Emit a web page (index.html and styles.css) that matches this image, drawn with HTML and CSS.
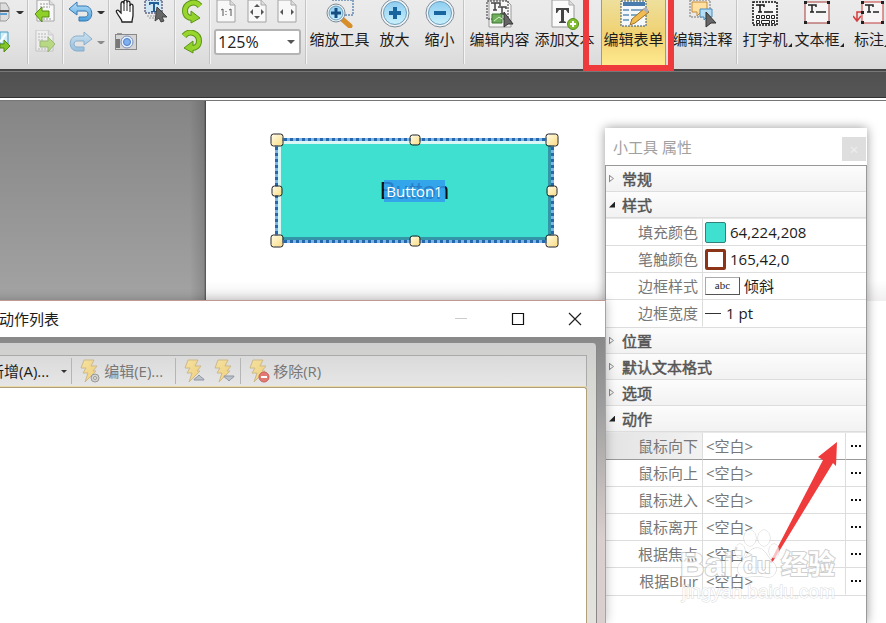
FILE: index.html
```html
<!DOCTYPE html>
<html lang="zh-CN">
<head>
<meta charset="utf-8">
<title>PDF 表单编辑</title>
<link rel="stylesheet" href="styles.css">
</head>
<body>
<svg class="defs" aria-hidden="true">
  <defs>
    <linearGradient id="boltFill" x1="0" y1="0" x2="1" y2="1"><stop offset="0" stop-color="#f4e1a0"/><stop offset="1" stop-color="#f0cf7c"/></linearGradient>
    <linearGradient id="blueBall" x1="0" y1="0" x2="0" y2="1"><stop offset="0" stop-color="#8ecdf0"/><stop offset="1" stop-color="#c9f1fc"/></linearGradient>
    <linearGradient id="undoFill" x1="0" y1="0" x2="0" y2="1"><stop offset="0" stop-color="#b9e1f8"/><stop offset="1" stop-color="#4a9fdc"/></linearGradient>
    <symbol id="bolt" viewBox="0 0 22 24"><path d="M4 1h10l-3 6h6l-4 5h3L5 23l3-9H3l3-5H1z" fill="url(#boltFill)" stroke="#cdb989"/></symbol>
    <symbol id="page" viewBox="0 0 20 24"><path d="M1 0h13l5 5v17H1z" fill="#f8f8f8" stroke="#a2a2a2"/><path d="M14 0v5h5" fill="#ddd" stroke="#aaa"/></symbol>
    <symbol id="turn" viewBox="0 0 22 24"><path d="M3 6c6-7 15-2 15 5 0 5-4 7-7 7" fill="none" stroke="#5b9416" stroke-width="6"/><path d="M12 11v12l-9-5z" fill="#91d12b" stroke="#5b9416"/><path d="M3 6c6-7 15-2 15 5 0 5-4 7-7 7" fill="none" stroke="#98d62e" stroke-width="4"/></symbol>
  </defs>
</svg>

<header class="ribbon">
  <div class="group group-print">
    <button aria-label="打印"><svg width="12" height="22" viewBox="0 0 12 22"><path d="M0 2h6l3 5v10l-3 3H0z" fill="#ddd" stroke="#999"/><path d="M0 10h9" stroke="#555" stroke-width="2"/><path d="M0 13h7" stroke="#5c9fd3" stroke-width="2"/></svg></button>
    <i class="caret"></i>
    <button aria-label="导出"><svg width="12" height="24" viewBox="0 0 12 24"><path d="M0 2h8v12H0z" fill="#cfeefa" stroke="#4b9fc4"/><path d="M0 12l6-8" stroke="#fff" stroke-width="2"/><path d="M0 14h4v-4l6 6-6 6v-4H0z" fill="#82c526" stroke="#568b18"/></svg></button>
  </div>
  <div class="group group-file">
    <button aria-label="导入"><svg width="22" height="24" viewBox="0 0 22 24"><use href="#page" x="2" y="0" width="19" height="23"/><path d="M6 4h8M6 7h10M9 19h8" stroke="#999" stroke-dasharray="2 1"/><path d="M1 14l7-7v4h7v6H8v5z" fill="#8fd028" stroke="#548b14"/></svg></button>
    <button class="faded" aria-label="导出页面"><svg width="22" height="24" viewBox="0 0 22 24"><use href="#page" x="1" y="0" width="19" height="23"/><path d="M4 4h9M4 7h11M4 10h5M4 19h8" stroke="#888" stroke-dasharray="2 1"/><path d="M21 14l-7-7v4H6v6h8v5z" fill="#8fd028" stroke="#548b14"/></svg></button>
  </div>
  <div class="group group-history">
    <button aria-label="撤销"><svg width="26" height="22" viewBox="0 0 26 22"><path d="M1 8l8-7v4h8c9 0 9 15 0 15h-6v-4h6c4 0 4-6 0-6H9v4z" fill="url(#undoFill)" stroke="#3578b4"/></svg></button>
    <i class="caret"></i>
    <button class="faded" aria-label="重做"><svg width="26" height="22" viewBox="0 0 26 22"><path d="M24 8l-8-7v4H9c-9 0-9 15 0 15h7v-4H9c-4 0-4-6 0-6h7v4z" fill="url(#undoFill)" stroke="#3578b4"/></svg></button>
    <i class="caret faded"></i>
  </div>
  <div class="group group-select">
    <button aria-label="手形工具"><svg width="22" height="24" viewBox="0 0 22 24"><path d="M7 22c0-3-3-5-5-9-2-3 1-4 3-1l1 1V4c0-3 3-3 3 0V2c0-3 3-3 3 0v1c0-3 3-2 3 0v3c0-3 3-2 3 0v9c0 3-1 4-1 7z" fill="#fff" stroke="#222" stroke-width="1.300"/><path d="M9 4v7M12 3v8M15 5v7" stroke="#222"/></svg></button>
    <button aria-label="选择文本"><svg width="26" height="24" viewBox="0 0 26 24"><rect x="2" y="0" width="17" height="13" fill="#cfe6f5" stroke="#225" stroke-dasharray="2 1"/><path d="M6 2h10v3h-1l-1-1h-2v7h2v1H8v-1h2V4H8L7 5H6z" fill="#225f99"/><path d="M4 16h10M6 18h8" stroke="#999" stroke-dasharray="2 1"/><path d="M14 7l10 10-5 0 2 4-3 1-2-4-4 3z" fill="#666" stroke="#444"/></svg></button>
    <button aria-label="快照"><svg width="22" height="20" viewBox="0 0 22 20"><path d="M2 1h5v2H2z" fill="#999"/><rect x="0.500" y="2.500" width="21" height="15" fill="#d5d5d5" stroke="#888"/><path d="M1 7h4v9H1z" fill="#777"/><circle cx="12" cy="10" r="6" fill="#e8eefb" stroke="#7792bd"/><circle cx="12" cy="10" r="3.500" fill="#80aff0" stroke="#4c7cc8"/></svg></button>
  </div>
  <div class="group group-rotate">
    <button class="mirrored" aria-label="向左旋转"><svg width="22" height="24" viewBox="0 0 22 24"><use href="#turn" width="22" height="24"/></svg></button>
    <button aria-label="向右旋转"><svg width="22" height="24" viewBox="0 0 22 24"><use href="#turn" width="22" height="24"/></svg></button>
  </div>
  <div class="group group-zoom">
    <div class="fits">
      <button aria-label="实际大小"><svg width="20" height="24" viewBox="0 0 20 24"><use href="#page" width="20" height="24"/><path d="M5 10l2-1v7M13 10l2-1v7" fill="none" stroke="#555"/><path d="M10 11v1M10 14v1" stroke="#555"/></svg></button>
      <button aria-label="适合页面"><svg width="20" height="24" viewBox="0 0 20 24"><use href="#page" width="20" height="24"/><path d="M10 4l3 3H7zM10 19l3-3H7zM3 12l3-3v6zM17 12l-3-3v6z" fill="#555"/></svg></button>
      <button aria-label="适合宽度"><svg width="20" height="24" viewBox="0 0 20 24"><use href="#page" width="20" height="24"/><path d="M3 12l3-3v6zM17 12l-3-3v6z" fill="#555"/></svg></button>
    </div>
    <div class="zoom-box"><select aria-label="缩放比例"><option>125%</option></select></div>
  </div>
  <div class="group group-tools">
    <button class="tool"><svg width="34" height="28" viewBox="0 0 34 28"><path d="M9 0h21v15H19" fill="none" stroke="#235a9c" stroke-dasharray="2 1"/><path d="M19 19l8 7" stroke="#d88e28" stroke-width="5" stroke-linecap="round"/><circle cx="13" cy="13" r="9" fill="#f1f5f7" stroke="#7b8b97"/><circle cx="13" cy="13" r="7" fill="url(#blueBall)" stroke="#6e9dbb"/><path d="M8 13h10M13 8v10" stroke="#174f82" stroke-width="3"/></svg><span>缩放工具</span></button>
    <button class="tool short"><svg width="30" height="28" viewBox="0 0 30 28"><circle cx="15" cy="13" r="14" fill="#f1f5f7" stroke="#7d8d99"/><circle cx="15" cy="13" r="11.500" fill="url(#blueBall)" stroke="#6e9dbb"/><path d="M9 13h12M15 7v12" stroke="#17649f" stroke-width="4"/></svg><span>放大</span></button>
    <button class="tool short"><svg width="30" height="28" viewBox="0 0 30 28"><circle cx="15" cy="13" r="14" fill="#f1f5f7" stroke="#7d8d99"/><circle cx="15" cy="13" r="11.500" fill="url(#blueBall)" stroke="#6e9dbb"/><path d="M9 13h12" stroke="#17649f" stroke-width="4"/></svg><span>缩小</span></button>
  </div>
  <div class="group group-edit">
    <button class="tool"><svg width="30" height="28" viewBox="0 0 30 28"><path d="M4 0h17l5 5v22H4z" fill="#f7f7f7" stroke="#999"/><path d="M2 1h21v18H2z" fill="none" stroke="#333" stroke-dasharray="2 1"/><path d="M6 3h9v3M10 3v7M8 10h4M13 7h8v2M17 7v7M15 14h4" fill="none" stroke="#444" stroke-width="1.500"/><path d="M7 14h10v9H7z" fill="#6dad5b" stroke="#3c7634"/><path d="M9 21l5-4 3 2" stroke="#d8f0ca" fill="none"/><path d="M19 12l9 12h-5l-4 3z" fill="#666" stroke="#333"/></svg><span>编辑内容</span></button>
    <button class="tool"><svg width="30" height="30" viewBox="0 0 30 30"><path d="M2 0h17l5 5v22H2z" fill="#fafafa" stroke="#999"/><path d="M19 0v5h5" fill="#ddd" stroke="#aaa"/><path d="M6 8h13v5h-1l-2-3h-2v11l2 1v1H9v-1l2-1V10H9l-2 3H6z" fill="#444"/><circle cx="23" cy="24" r="5.500" fill="#82bd2f" stroke="#558d1b"/><path d="M20 24h6M23 21v6" stroke="#fff" stroke-width="2"/></svg><span>添加文本</span></button>
    <button class="tool active" aria-pressed="true"><svg width="32" height="28" viewBox="0 0 32 28"><path d="M3 1h25v25H3z" fill="#f4f8fa" stroke="#33557a" stroke-dasharray="2 1"/><path d="M5 2h22v4H5z" fill="#477cad"/><path d="M5 10h6M5 15h6M5 20h6M13 10h12M13 15h10M13 20h8" stroke="#83a9c6" stroke-width="2"/><path d="M12 25l2-6L27 8l4 4-14 11z" fill="#f2bd50" stroke="#9d722c"/><path d="M25 9l3-2 3 4-3 2z" fill="#adb0bc"/></svg><span>编辑表单</span></button>
    <button class="tool"><svg width="32" height="28" viewBox="0 0 32 28"><path d="M3 0h20v17H3z" fill="none" stroke="#777" stroke-dasharray="2 1"/><path d="M5 2h15v10h-6l-4 4v-4H5z" fill="#ffe0a0" stroke="#c58a38"/><path d="M13 9h12v8h-5l-3 3v-3h-4z" fill="#b5dcf5" stroke="#4d8abb"/><path d="M19 12l10 11h-5l-5 4z" fill="#666" stroke="#333"/></svg><span>编辑注释</span></button>
    <div class="callout"></div>
  </div>
  <div class="group group-type">
    <button class="tool mid"><svg width="28" height="28" viewBox="0 0 28 28"><path d="M2 2h24v23H2z" fill="#f6f6f6" stroke="#111" stroke-width="1.500" stroke-dasharray="2 1"/><path d="M5 5h8v2M9 5v7M7 12h4M13 12h9" fill="none" stroke="#111" stroke-width="1.500"/><g fill="none" stroke="#222"><path d="M5.500 15.500h3v3h-3zM10.500 15.500h3v3h-3zM15.500 15.500h3v3h-3zM20.500 15.500h3v3h-3zM5.500 20.500h3v3h-3zM10.500 20.500h8v3h-8zM20.500 20.500h3v3h-3z"/></g></svg><span class="more">打字机</span></button>
    <button class="tool mid"><svg width="28" height="28" viewBox="0 0 28 28"><path d="M2 2h24v21H2z" fill="#f6f4f4" stroke="#a33a3a"/><path d="M5 5h8v2M9 5v7M7 12h4M13 12h10" fill="none" stroke="#222" stroke-width="1.500"/><path d="M1 1h3v3H1zM24 1h3v3h-3zM1 21h3v3H1zM24 21h3v3h-3z" fill="#222"/></svg><span class="more">文本框</span></button>
    <button class="tool mid"><svg width="32" height="28" viewBox="0 0 32 28"><path d="M9 2h21v21H9z" fill="#f6f4f4" stroke="#c33c3c"/><path d="M9 12H4v8M0 16l4 5 4-5" fill="none" stroke="#d53c3c" stroke-width="1.500"/><path d="M12 5h8v2M16 5v7M14 12h4M20 12h6" fill="none" stroke="#222" stroke-width="1.500"/><path d="M8 1h3v3H8zM28 1h3v3h-3zM8 21h3v3H8zM28 21h3v3h-3zM8 11h3v3H8z" fill="#222"/></svg><span class="more">标注</span></button>
  </div>
</header>
<div class="strip"></div>

<main class="workspace">
  <div class="gutter"></div>
  <div class="sheet"></div>

  <div class="field">
    <div class="field-face">
      <span class="caption">Button</span>
      <span class="name-tag">Button1</span>
    </div>
    <i class="grip nw"></i><i class="grip small n"></i><i class="grip ne"></i>
    <i class="grip small w"></i><i class="grip small e"></i>
    <i class="grip sw"></i><i class="grip small s"></i><i class="grip se"></i>
  </div>

  <aside class="panel">
    <div class="panel-head"><h2>小工具 属性</h2><button aria-label="关闭">×</button></div>
    <div class="panel-body">
      <button class="section" aria-expanded="false">常规</button>
      <button class="section open" aria-expanded="true">样式</button>
      <table>
        <tr><th scope="row">填充颜色</th><td><div class="value"><i class="swatch fill"></i>64,224,208</div></td></tr>
        <tr><th scope="row">笔触颜色</th><td><div class="value"><i class="swatch stroke"></i>165,42,0</div></td></tr>
        <tr><th scope="row">边框样式</th><td><div class="value"><i class="bevel">abc</i>倾斜</div></td></tr>
        <tr><th scope="row">边框宽度</th><td><div class="value"><i class="line"></i>1 pt</div></td></tr>
      </table>
      <button class="section" aria-expanded="false">位置</button>
      <button class="section" aria-expanded="false">默认文本格式</button>
      <button class="section" aria-expanded="false">选项</button>
      <button class="section open" aria-expanded="true">动作</button>
      <table class="actions">
        <tr class="current"><th scope="row">鼠标向下</th><td>&lt;空白&gt;</td><td class="pick"><button aria-label="选择动作"><i></i></button></td></tr>
        <tr><th scope="row">鼠标向上</th><td>&lt;空白&gt;</td><td class="pick"><button aria-label="选择动作"><i></i></button></td></tr>
        <tr><th scope="row">鼠标进入</th><td>&lt;空白&gt;</td><td class="pick"><button aria-label="选择动作"><i></i></button></td></tr>
        <tr><th scope="row">鼠标离开</th><td>&lt;空白&gt;</td><td class="pick"><button aria-label="选择动作"><i></i></button></td></tr>
        <tr><th scope="row">根据焦点</th><td>&lt;空白&gt;</td><td class="pick"><button aria-label="选择动作"><i></i></button></td></tr>
        <tr><th scope="row">根据Blur</th><td>&lt;空白&gt;</td><td class="pick"><button aria-label="选择动作"><i></i></button></td></tr>
      </table>
    </div>
    <svg class="pointer" width="70" height="122" viewBox="0 0 70 122"><path d="M68 0L49 15l5 3L1 120l2 1L64 21l3 3z" fill="#ef3b3b"/></svg>
    <div class="watermark">
      <div class="brand"><span class="bai">Bai</span>
        <svg width="48" height="52" viewBox="0 0 48 52"><g fill="#fff" stroke="#bbb"><ellipse cx="7" cy="22" rx="5" ry="7"/><ellipse cx="17" cy="9" rx="6" ry="8"/><ellipse cx="31" cy="9" rx="6" ry="8"/><ellipse cx="41" cy="22" rx="5" ry="7"/><path d="M24 19c8 0 10 9 16 14 6 6 3 16-6 15-7-1-13-1-20 0-9 1-12-9-6-15 6-5 8-14 16-14z"/></g><text x="24" y="44" text-anchor="middle" class="du">du</text></svg>
        <span class="jy">经验</span></div>
      <div class="site">jingyan.baidu.com</div>
    </div>
  </aside>

  <section class="dialog">
    <div class="title-bar">
      <h2>动作列表</h2>
      <button aria-label="最小化"><svg width="14" height="14" viewBox="0 0 14 14"><path d="M1 6.500h12" stroke="#ccc"/></svg></button>
      <button aria-label="最大化"><svg width="14" height="14" viewBox="0 0 14 14"><path d="M1.500 1.500h11v11h-11z" fill="none" stroke="#111" stroke-width="1.200"/></svg></button>
      <button aria-label="关闭"><svg width="14" height="14" viewBox="0 0 14 14"><path d="M1 1l12 12M13 1L1 13" stroke="#222" stroke-width="1.200"/></svg></button>
    </div>
    <div class="frame"><div class="inner">
      <div class="toolbar">
        <button class="add">新增(A)...</button><i class="caret"></i>
        <i class="rule"></i>
        <button disabled><svg width="22" height="24" viewBox="0 0 22 24"><use href="#bolt" width="22" height="24"/><circle cx="15" cy="19" r="4" fill="#d2d2cf" stroke="#999"/><circle cx="15" cy="19" r="1.500" fill="#eee" stroke="#999"/></svg>编辑(E)...</button>
        <i class="rule wide"></i>
        <button disabled aria-label="上移"><svg width="22" height="24" viewBox="0 0 22 24"><use href="#bolt" width="22" height="24"/><path d="M10 21c0-2 3-2 5-5 2 3 5 3 5 5z" fill="#bcc2cb" stroke="#8f95a0"/></svg></button>
        <button class="down" disabled aria-label="下移"><svg width="22" height="24" viewBox="0 0 22 24"><use href="#bolt" width="22" height="24"/><path d="M10 17c0 2 3 2 5 5 2-3 5-3 5-5z" fill="#bcc2cb" stroke="#8f95a0"/></svg></button>
        <i class="rule"></i>
        <button disabled><svg width="22" height="24" viewBox="0 0 22 24"><use href="#bolt" width="22" height="24"/><circle cx="15" cy="18" r="5" fill="#e07a72" stroke="#c8605a"/><path d="M12 18h6" stroke="#fff" stroke-width="2"/></svg>移除(R)</button>
      </div>
      <div class="list"></div>
    </div></div>
  </section>
</main>
</body>
</html>
```
FILE: styles.css
```css
* { box-sizing: border-box; }
body {
  margin: 0;
  height: 100vh;
  overflow: hidden;
  display: flex;
  flex-direction: column;
  font: 15px/22px "Open Sans", "Noto Sans CJK SC", sans-serif;
  color: #1c1c1c;
}
button {
  border: 0;
  padding: 0;
  background: none;
  font: inherit;
  color: inherit;
  white-space: nowrap;
}
svg { display: block; flex: none; }
h2 { margin: 0; font: inherit; }
.defs { position: absolute; width: 0; height: 0; }
.faded { opacity: .5; }
.mirrored svg { transform: scaleX(-1); }
.caret {
  border: 3px solid transparent;
  border-top-color: #333;
  border-bottom: 0;
}

/* Ribbon */
.ribbon {
  display: flex;
  flex: none;
  height: 69px;
  background: linear-gradient(#ebebeb, #e6e6e6 50%, #d9d9d9);
}
.group {
  flex: none;
  margin-bottom: 5px;
  border-right: 1px solid #c4c4c4;
  box-shadow: 1px 0 #f5f5f5;
}
.group-print, .group-history {
  display: grid;
  grid-template-rows: 24px 24px;
  row-gap: 6px;
  align-items: center;
  align-content: start;
}
.group-print { width: 28px; grid-template-columns: 16px 8px; }
.group-history { width: 46px; padding-left: 5px; grid-template-columns: 29px 8px; }
.group-file, .group-rotate {
  display: flex;
  flex-direction: column;
  align-items: center;
  gap: 6px;
  width: 35px;
}
.group-select {
  display: grid;
  grid-template-columns: 28px 28px;
  grid-template-rows: 24px 24px;
  row-gap: 6px;
  align-content: start;
  width: 66px;
  padding-left: 6px;
}
.group-zoom { width: 96px; padding: 0 4px; }
.fits { display: flex; justify-content: space-between; padding: 0 4px 0 2px; }
.zoom-box { position: relative; margin-top: 5px; }
.zoom-box::after {
  content: "";
  position: absolute;
  right: 6px;
  top: 11px;
  border: 4px solid transparent;
  border-top-color: #555;
  border-bottom: 0;
}
select {
  appearance: none;
  display: block;
  width: 100%;
  height: 26px;
  padding: 0 2px;
  border: 2px solid #b4b4b4;
  border-radius: 3px;
  background: #fff;
  font: 16px "Open Sans", sans-serif;
  color: #222;
}
.group-tools, .group-edit, .group-type { display: flex; }
.group-tools { padding: 0 1px; }
.group-edit { position: relative; padding: 0 1px 0 3px; }
.group-type { border: 0; padding: 0 2px; }
.tool {
  flex: none;
  width: 65px;
  height: 66px;
  display: grid;
  grid-template-rows: 28px 22px;
  justify-items: center;
  align-content: start;
}
.tool.short { width: 45px; }
.tool.mid { width: 52px; }
.tool.active {
  margin: 0 4px;
  background: linear-gradient(#eedf9c, #f0d273 50%, #ffe98f);
  box-shadow: inset 1px 0 #a89b70, inset -1px 0 #a89b70;
}
.more { position: relative; }
.more::after {
  content: "";
  position: absolute;
  left: 100%;
  bottom: 3px;
  border: 2px solid #222;
  border-top-color: transparent;
  border-left-color: transparent;
}
.callout {
  position: absolute;
  left: 119px;
  top: -6px;
  width: 91px;
  height: 77px;
  border: 6px solid #ee3a3c;
  z-index: 1;
}
.strip {
  flex: none;
  height: 32px;
  background: linear-gradient(#444 2px, #777 2px 3px, #505050 3px, #565656 28px, #333 28px 29px, #fff 29px 31px, #777 31px);
}

/* Workspace */
.workspace { flex: 1; display: flex; position: relative; min-height: 0; }
.gutter {
  flex: none;
  width: 206px;
  background: linear-gradient(90deg, transparent 92%, #0002 99%, #0008), linear-gradient(#858585, #a3a3a3 200px);
}
.sheet { flex: 1; background: linear-gradient(#fff 180px, #f0eeee 200px, #fff 200px); }

/* Selected form field */
.field {
  position: absolute;
  left: 275px;
  top: 37px;
  width: 279px;
  height: 105px;
  border: 3px dotted #7db4e4;
  background: #2468ae;
}
.field-face {
  display: grid;
  place-items: center;
  height: 100%;
  border: 3px solid;
  border-color: #d8f7f5 #3595a8 #3595a8 #d8f7f5;
  background: #40e0d0;
}
.caption, .name-tag { grid-area: 1 / 1; }
.caption { font: 24px "Liberation Sans", sans-serif; color: #111; }
.name-tag { padding: 0 2px; background: #2f97f0d0; color: #fff; }
.grip {
  position: absolute;
  width: 13px;
  height: 13px;
  border: 1px solid #222;
  border-radius: 3px;
  background: linear-gradient(135deg, #fffbe8, #fbdc80);
  translate: -50% -50%;
}
.grip.small { width: 11px; height: 11px; }
.nw, .w, .sw { left: -1px; }
.n, .s { left: 50%; }
.ne, .e, .se { left: calc(100% + 1px); }
.nw, .n, .ne { top: -1px; }
.w, .e { top: 50%; }
.sw, .s, .se { top: calc(100% + 1px); }

/* Property panel */
.panel {
  position: absolute;
  right: 19px;
  top: 27px;
  bottom: 0;
  width: 262px;
  display: flex;
  flex-direction: column;
  background: #fff;
  box-shadow: 0 0 10px #0006;
}
.panel-head {
  display: flex;
  justify-content: space-between;
  align-items: center;
  height: 37px;
  padding: 0 1px 0 8px;
  color: #a0a0a0;
}
.panel-head button { width: 24px; height: 24px; margin-top: 4px; background: #dedede; color: #eee; }
.panel-body { flex: 1; border: 1px solid #999; border-bottom: 0; }
.section {
  display: flex;
  align-items: center;
  width: 100%;
  height: 26px;
  padding-left: 3px;
  border-bottom: 1px solid #ddd;
  background: linear-gradient(#fcfcfc, #f2f2f2);
  color: #555;
  -webkit-text-stroke: 0.5px #555;
}
.section::before {
  content: "";
  width: 5px;
  height: 8px;
  margin-right: 8px;
  background: #888;
  clip-path: polygon(0 0, 100% 50%, 0 100%, 0 0, 1px 2px, 1px 6px, 4px 50%, 1px 2px);
}
.section.open::before { width: 6px; height: 6px; margin-right: 7px; background: #222; clip-path: polygon(100% 0, 100% 100%, 0 100%); }
table {
  width: 100%;
  table-layout: fixed;
  border-spacing: 0;
  border-bottom: 1px solid #ddd;
  border-top: 1px solid #e8e8e8;
}
th, td { height: 27px; padding: 0; border-bottom: 1px solid #ddd; line-height: 22px; }
tr:last-child > * { border-bottom-color: transparent; }
th { width: 97px; padding-right: 4px; border-right: 1px solid #ddd; text-align: right; font-weight: 400; color: #777; }
td { padding-left: 2px; }
.value { display: flex; align-items: center; gap: 4px; }
.actions td { padding-left: 3px; color: #777; }
.current th { background: linear-gradient(90deg, #e3e3e3, #f2f2f2); }
.current th, .current td { border-bottom-color: #999; }
.swatch { width: 21px; height: 21px; border: 1px solid #337f79; border-radius: 2px; background: #40e0d0; }
.swatch.stroke { border: 3px solid #8c3418; background: #fff; }
.bevel {
  width: 35px;
  height: 18px;
  border: 1px solid #aaa;
  border-right-color: #555;
  border-bottom-color: #555;
  font: 11px/14px "Liberation Serif", serif;
  text-align: center;
}
.line { width: 16px; height: 1px; margin-right: 1px; background: #333; }
.actions .pick { width: 21px; padding: 0; border-left: 1px solid #ddd; text-align: center; }
.pick button { display: grid; place-items: center; width: 100%; height: 22px; }
.pick i { width: 2px; height: 2px; background: #111; box-shadow: -4px 0 #111, 4px 0 #111; }

.pointer { position: absolute; right: 28px; top: 314px; }
.watermark {
  position: absolute;
  right: 32px;
  top: 401px;
  opacity: .7;
  color: #fff;
  -webkit-text-stroke: 2px #bbb;
  paint-order: stroke fill;
}
.brand { display: flex; align-items: center; justify-content: flex-end; height: 52px; }
.bai { font: bold 34px/34px "Liberation Sans", sans-serif; margin-top: 18px; }
.jy { font-size: 27px; font-weight: 700; line-height: 28px; margin-top: 18px; }
.du { font: bold 22px "Liberation Sans", sans-serif; fill: #fff; stroke: #bbb; stroke-width: 2px; }
.site { font: 19px/22px "Liberation Sans", sans-serif; text-align: right; -webkit-text-stroke: 1px #ccc; }

/* Action list dialog */
.dialog {
  position: absolute;
  left: -30px;
  top: 199px;
  bottom: 0;
  width: 636px;
  display: flex;
  flex-direction: column;
  border: 1px solid #c09a92;
  border-bottom: 0;
  background: #fff;
  box-shadow: 0 0 10px #0004;
}
.title-bar { display: flex; align-items: center; height: 36px; padding-right: 2px; }
.title-bar h2 { flex: 1; padding-left: 28px; }
.title-bar button { display: grid; place-items: center; width: 57px; height: 36px; }
.frame { flex: 1; display: flex; padding: 6px 8px 0; background: linear-gradient(#898989, #9a9a9a 60px, #d8cfce 200px); }
.inner {
  flex: 1;
  display: flex;
  flex-direction: column;
  padding: 12px 9px 0;
  border-right: 1px solid #888;
  border-radius: 0 4px 0 0;
  background: linear-gradient(#cfcfcf, #dcdcd6 60px, #e3e2dc);
}
.toolbar {
  display: flex;
  align-items: center;
  height: 32px;
  border: 1px solid #aaa;
  border-bottom: 1px solid #ead9a4;
  background: linear-gradient(#dadada, #e6e6e6);
}
.toolbar button { display: flex; align-items: center; gap: 2px; }
.toolbar button:disabled { color: #777; }
.toolbar .caret { margin: 0 4px 0 12px; }
.rule { width: 1px; height: 26px; margin-right: 8px; background: #b5b5b5; }
.rule.wide { margin-left: 12px; }
.toolbar .down { margin: 0 4px 0 8px; }
.list { flex: 1; border: 1px solid #b0a17c; border-bottom: 0; border-left: 0; border-radius: 0 3px 0 0; background: #fff; }
```
